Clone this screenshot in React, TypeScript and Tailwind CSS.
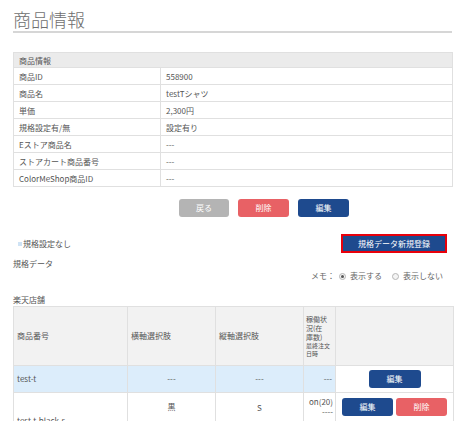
const infoRows: [string, string][] = [
  ["商品ID", "558900"],
  ["商品名", "testTシャツ"],
  ["単価", "2,300円"],
  ["規格設定有/無", "設定有り"],
  ["Eストア商品名", "---"],
  ["ストアカート商品番号", "---"],
  ["ColorMeShop商品ID", "---"],
];

function Radio({ checked }: { checked?: boolean }) {
  return (
    <span className="inline-flex h-[7px] w-[7px] items-center justify-center rounded-full border border-[#b5b5b5] bg-[#f4f4f4]">
      {checked && <span className="h-[3px] w-[3px] rounded-full bg-[#555]" />}
    </span>
  );
}

function Btn({ label, color, w = "w-[51px]" }: { label: string; color: string; w?: string }) {
  return (
    <button
      className={`${w} h-[18px] rounded-[3px] ${color} text-[8px] leading-[18px] text-white`}>
      {label}
    </button>
  );
}

export default function App() {
  return (
    <div className="h-[421px] w-[465px] overflow-hidden bg-white px-[13px] pt-[10px] font-['Noto_Sans_CJK_JP','Noto_Sans',sans-serif] text-[8px] text-[#555]">
      <h1 className="border-b-2 border-[#d6d6d6] pb-[3px] text-[18px] font-light leading-[18px] text-[#6f6f6f]">
        商品情報
      </h1>

      {/* 商品情報テーブル */}
      <table className="mt-[19px] w-[440px] border-collapse border border-[#e0e0e0]">
        <tbody>
          <tr className="h-[15px] bg-[#ebebeb]">
            <td colSpan={2} className="border border-[#e0e0e0] px-[5px] leading-[13px]">
              商品情報
            </td>
          </tr>
          {infoRows.map(([k, v]) => (
            <tr key={k} className="h-[17px]">
              <td className="w-[147px] border border-[#e0e0e0] px-[5px] leading-[15px]">{k}</td>
              <td className="border border-[#e0e0e0] px-[5px] leading-[15px]">{v}</td>
            </tr>
          ))}
        </tbody>
      </table>

      <div className="mt-[12px] flex gap-[9px] pl-[166px]">
        <Btn label="戻る" color="bg-[#b4b4b4]" w="w-[50px]" />
        <Btn label="削除" color="bg-[#e86165]" />
        <Btn label="編集" color="bg-[#1e4a8e]" />
      </div>

      <div className="mt-[17px] flex items-center justify-between pl-[5px] pr-[5px]">
        <span className="flex items-center gap-[1px]">
          <span className="h-[4px] w-[4px] bg-[#cfe3f5]" />
          規格設定なし
        </span>
        <button className="h-[19px] w-[106px] border-2 border-[#e8000b] bg-[#1e4a8e] text-[8px] leading-[15px] text-white">
          規格データ新規登録
        </button>
      </div>

      <div className="mt-[5px] leading-[12px]">規格データ</div>
      <div className="flex items-center justify-end gap-[4px] pr-[9px] leading-[12px] text-[#666]">
        <span>メモ：</span>
        <Radio checked />
        <span>表示する</span>
        <span className="w-[2px]" />
        <Radio />
        <span>表示しない</span>
      </div>

      <div className="mt-[12px] leading-[12px]">楽天店舗</div>

      {/* 規格データテーブル */}
      <table className="w-[440px] table-fixed border-collapse border border-[#e0e0e0]">
        <colgroup>
          <col className="w-[114px]" />
          <col className="w-[88px]" />
          <col className="w-[88px]" />
          <col className="w-[32px]" />
          <col className="w-[118px]" />
        </colgroup>
        <thead>
          <tr className="h-[59px] bg-[#f2f2f2] text-left">
            <th className="border border-[#e0e0e0] px-[3px] font-normal">商品番号</th>
            <th className="border border-[#e0e0e0] px-[3px] font-normal">横軸選択肢</th>
            <th className="border border-[#e0e0e0] px-[3px] font-normal">縦軸選択肢</th>
            <th className="border border-[#e0e0e0] px-[2px] font-normal">
              <div className="text-[7px] leading-[9px]">稼働状</div>
              <div className="text-[7px] leading-[9px]">況(在</div>
              <div className="text-[7px] leading-[9px]">庫数)</div>
              <div className="text-[6px] leading-[8px]">最終注文</div>
              <div className="text-[6px] leading-[8px]">日時</div>
            </th>
            <th className="border border-[#e0e0e0] font-normal" />
          </tr>
        </thead>
        <tbody>
          <tr className="h-[27px]">
            <td className="border border-[#e0e0e0] bg-[#dcedfb] px-[3px]">test-t</td>
            <td className="border border-[#e0e0e0] bg-[#dcedfb] text-center">---</td>
            <td className="border border-[#e0e0e0] bg-[#dcedfb] text-center">---</td>
            <td className="border border-[#e0e0e0] bg-[#dcedfb] px-[3px] text-right">---</td>
            <td className="border border-[#e0e0e0] text-center">
              <div className="flex justify-center">
                <Btn label="編集" color="bg-[#1e4a8e]" w="w-[52px]" />
              </div>
            </td>
          </tr>
          <tr className="h-[55px]">
            <td className="border border-[#e0e0e0] px-[3px] pt-[1px]">test-t-black-s</td>
            <td className="border border-[#e0e0e0] pt-[8px] text-center align-top">黒</td>
            <td className="border border-[#e0e0e0] pt-[9px] text-center align-top">S</td>
            <td className="border border-[#e0e0e0] px-[2px] pt-[4px] text-right align-top leading-[10px]">
              on(20)
              <br />
              ----
            </td>
            <td className="border border-[#e0e0e0] pt-[5px] align-top">
              <div className="flex justify-center gap-[3px]">
                <Btn label="編集" color="bg-[#1e4a8e]" />
                <Btn label="削除" color="bg-[#e86165]" />
              </div>
            </td>
          </tr>
        </tbody>
      </table>
    </div>
  );
}
